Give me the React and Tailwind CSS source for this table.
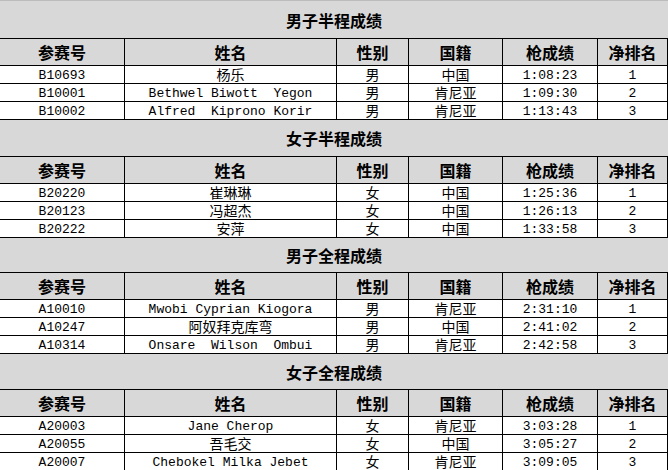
import React from 'react';

const sections = [
    {
        title: '男子半程成绩',
        titleH: 'h-[39px]',
        rows: [
            ['B10693', '杨乐', '男', '中国', '1:08:23', '1'],
            ['B10001', 'Bethwel Biwott  Yegon', '男', '肯尼亚', '1:09:30', '2'],
            ['B10002', 'Alfred  Kiprono Korir', '男', '肯尼亚', '1:13:43', '3'],
        ],
    },
    {
        title: '女子半程成绩',
        titleH: 'h-[37px]',
        rows: [
            ['B20220', '崔琳琳', '女', '中国', '1:25:36', '1'],
            ['B20123', '冯超杰', '女', '中国', '1:26:13', '2'],
            ['B20222', '安萍', '女', '中国', '1:33:58', '3'],
        ],
    },
    {
        title: '男子全程成绩',
        titleH: 'h-[35px]',
        rows: [
            ['A10010', 'Mwobi Cyprian Kiogora', '男', '肯尼亚', '2:31:10', '1'],
            ['A10247', '阿奴拜克库弯', '男', '中国', '2:41:02', '2'],
            ['A10314', 'Onsare  Wilson  Ombui', '男', '肯尼亚', '2:42:58', '3'],
        ],
    },
    {
        title: '女子全程成绩',
        titleH: 'h-[36px]',
        rows: [
            ['A20003', 'Jane Cherop', '女', '肯尼亚', '3:03:28', '1'],
            ['A20055', '吾毛交', '女', '中国', '3:05:27', '2'],
            ['A20007', 'Chebokel Milka Jebet', '女', '肯尼亚', '3:09:05', '3'],
        ],
    },
];

const headers = ['参赛号', '姓名', '性别', '国籍', '枪成绩', '净排名'];

const cols = 'grid grid-cols-[125px_212px_72px_94px_95px_70px]';

const isCjk = (s) => /[\u4e00-\u9fff]/.test(s);

const Cell = ({ value }) => (
    <div
        className={`h-[18px] overflow-hidden border-r border-b border-black text-center whitespace-pre leading-[17px] ${isCjk(value)
            ? 'text-[14px] font-["Noto_Sans_CJK_SC",sans-serif]'
            : 'text-[13px] pt-[1px] font-["Liberation_Mono","Noto_Sans_CJK_SC",monospace]'
            }`}
    >
        {value}
    </div>
);

const Section = ({ title, titleH, rows, first }) => (
    <div>
        <div
            className={`${titleH} flex items-center justify-center bg-[#d8d8d8] border-b border-black text-[16px] font-bold leading-none ${first ? 'border-t border-t-[#bcbcbc]' : ''}`}
        >
            {title}
        </div>
        <div className={cols}>
            {headers.map((h) => (
                <div
                    key={h}
                    className="h-[27px] bg-[#d8d8d8] border-r border-b border-black flex items-center justify-center text-[16px] font-bold leading-none"
                >
                    {h}
                </div>
            ))}
            {rows.map((r, i) => r.map((v, j) => <Cell key={`${i}-${j}`} value={v} />))}
        </div>
    </div>
);

export default function App() {
    return (
        <div className="w-[668px] h-[470px] overflow-hidden bg-white text-black font-['Noto_Sans_CJK_SC',sans-serif]">
            {sections.map((s, i) => (
                <Section key={s.title} {...s} first={i === 0} />
            ))}
        </div>
    );
}
